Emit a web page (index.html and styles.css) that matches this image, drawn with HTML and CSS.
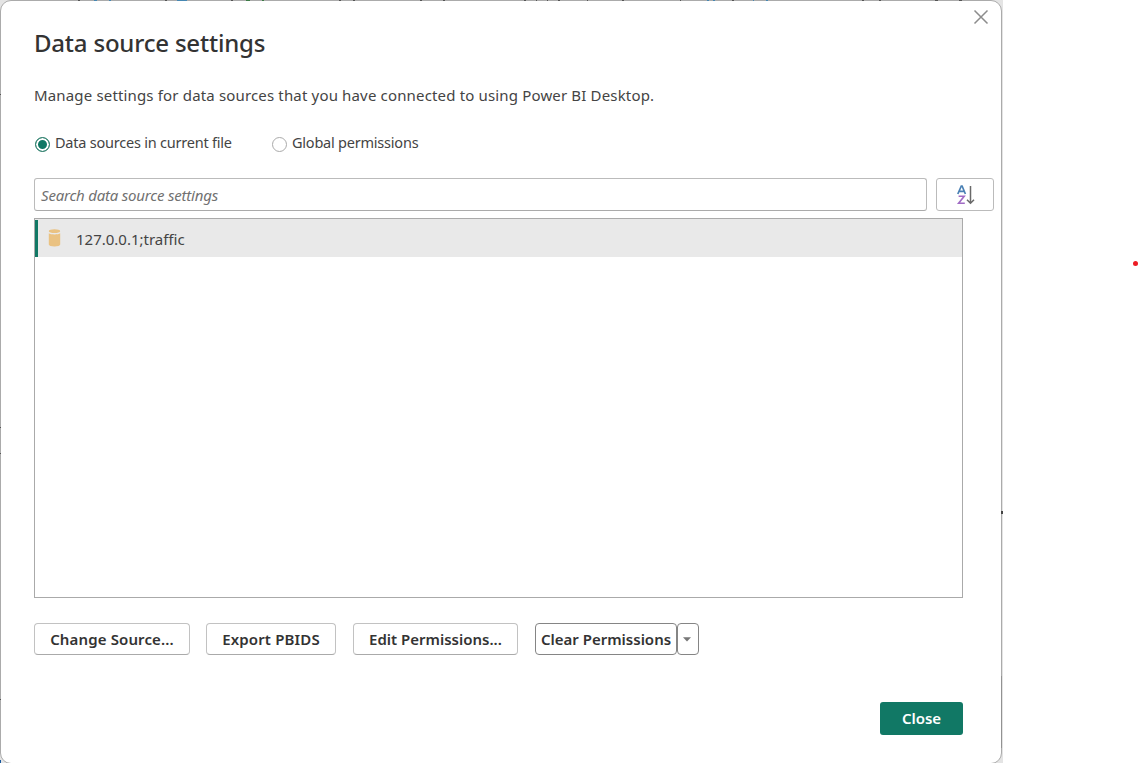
FILE: index.html
```html
<!DOCTYPE html>
<html lang="en">
<head>
<meta charset="utf-8">
<title>Data source settings</title>
<link rel="stylesheet" href="styles.css">
</head>
<body>
<div class="backdrop">
<main class="dialog">
  <button class="dismiss" aria-label="Dismiss"><svg width="16" height="16" viewBox="0 0 16 16"><path d="M1.500 1.500l13 13M14.500 1.500l-13 13" fill="none" stroke="#8c8c8c" stroke-width="1.500"/></svg></button>
  <h1 class="title"><span>Data source settings</span></h1>
  <p class="intro"><span>Manage settings for data sources that you have connected to using Power BI Desktop.</span></p>
  <div class="scope">
    <label class="option"><i class="radio radio-on"></i><span>Data sources in current file</span></label>
    <label class="option"><i class="radio"></i><span>Global permissions</span></label>
  </div>
  <div class="search-row">
    <div class="search"><span>Search data source settings</span></div>
    <button class="sort" aria-label="Sort"><svg width="20" height="22" viewBox="0 0 20 22" fill="none"><path d="M1.800 10L5.300 2h.8L9.400 10M3.200 7.300h4.900" stroke="#4a80b4" stroke-width="1.700"/><path d="M2.600 12.300h5.600L2.600 19.300h6.200" stroke="#a06bc4" stroke-width="1.600"/><path d="M14.500 2v17.200M11 15.800l3.500 3.500 3.500-3.500" stroke="#696969" stroke-width="1.500"/></svg></button>
  </div>
  <div class="list">
    <div class="item">
      <svg class="database" width="14" height="20" viewBox="0 0 14 20"><path d="M.8 5.200v11.300c0 1.200 2.500 2 5.700 2s5.700-.8 5.700-2V5.200c-1 .8-3.200 1.200-5.700 1.200S1.800 6 .8 5.200z" fill="#eac282"/><ellipse cx="6.500" cy="3.200" rx="5.700" ry="1.900" fill="#eac282"/></svg>
      <span class="name">127.0.0.1;traffic</span>
    </div>
  </div>
  <div class="actions">
    <button class="button change"><span>Change Source...</span></button>
    <button class="button export"><span>Export PBIDS</span></button>
    <button class="button edit"><span>Edit Permissions...</span></button>
    <div class="split">
      <button class="button clear"><span>Clear Permissions</span></button>
      <button class="button more" aria-label="More"><svg width="8" height="5" viewBox="0 0 8 5"><path d="M0 .3h8L4 4.500z" fill="#777"/></svg></button>
    </div>
  </div>
  <div class="footer"><button class="close"><span>Close</span></button></div>
</main>
</div>
<svg class="edge" width="1003" height="763" viewBox="0 0 1003 763" fill="none">
  <path d="M78 .5h2M165 .5h2M231 .5h2M339 .5h2M353 .5h2M420 .5h2M443 .5h2M524 .5h2M536 .5h1M547 .5h1M558 .5h2M587 .5h1M622 .5h2M680 .5h1M732 .5h2M862 .5h2M879 .5h2M935 .5h3M959 .5h3" stroke="#555"/>
  <path d="M94 .5h3M109 .5h2M177 .5h10M707 .5h2M713 .5h2M753 .5h1M766 .5h2" stroke="#4687b2"/>
  <path d="M246 .5h4M262 .5h2" stroke="#3c7a45"/>
  <path d="M0 94.500h1M0 699.500h1M0 427.500h1M0 453.500h1" stroke="#555"/>
  <path d="M1001 512.500h2" stroke="#444" stroke-width="3"/>
  <path d="M1001.500 676v72" stroke="#929292"/>
  <path d="M0 761.500h1" stroke="#17579d" stroke-width="3"/>
</svg>
<i class="dot"></i>
</body>
</html>
```
FILE: styles.css
```css
* { box-sizing: border-box; }
body { margin: 0; height: 763px; overflow: hidden; position: relative; background: #fff; font: 15px/20px "Noto Sans", "Open Sans", sans-serif; color: #444; }
button { font: inherit; padding: 0; margin: 0; background: #fff; border: 0; }
h1, p { margin: 0; }
svg { display: block; }
span { white-space: nowrap; }
.backdrop { width: 1003px; height: 764px; background: #e4e4e4; }
.dialog { position: relative; width: 1002px; height: 764px; padding: 0 7px 0 33px; border: 1px solid #ababab; border-radius: 11px; background: #fff; display: flex; flex-direction: column; }
.dismiss { position: absolute; right: 12px; top: 8px; }
.title { height: 32px; margin-top: 26px; font-size: 24px; line-height: 32px; font-weight: 500; letter-spacing: -.2px; color: #333; }
.intro { height: 20px; margin-top: 26px; letter-spacing: .16px; }
.scope { display: flex; height: 20px; margin-top: 27px; font-size: 14.5px; letter-spacing: -.22px; }
.option { display: flex; align-items: flex-start; gap: 5px; width: 237px; }
.radio { width: 15px; height: 15px; margin: 5px 0 0 1px; border: 1px solid #aaa; border-radius: 50%; flex: none; }
.radio-on { border-color: #2f7e6b; background: #117865; box-shadow: inset 0 0 0 2px #fff; }
.search-row { display: flex; gap: 9px; height: 33px; margin-top: 26px; }
.search { width: 893px; border: 1px solid #bbb; border-bottom-color: #aaa; border-radius: 3px; padding: 7px 6px; font-style: italic; line-height: 18px; letter-spacing: -.2px; color: #717171; }
.sort { width: 58px; border: 1px solid #bbb; border-radius: 3px; display: flex; align-items: center; justify-content: center; padding-left: 2px; }
.list { width: 929px; height: 380px; margin-top: 7px; border: 1px solid #aaa; }
.item { display: flex; align-items: center; height: 38px; background: linear-gradient(#117865, #117865) 0 1px / 3px 37px no-repeat #e9e9e9; padding-left: 13px; }
.name { margin: 2px 0 0 14px; }
.actions { display: flex; margin-top: 25px; height: 32px; }
.button { height: 32px; border: 1px solid #c2c2c2; border-bottom-color: #aaa; border-radius: 4px; font-weight: 600; color: #333; display: flex; align-items: center; justify-content: center; }
.change { width: 156px; margin-right: 16px; letter-spacing: .13px; }
.export { width: 130px; margin-right: 17px; letter-spacing: .15px; }
.edit { width: 165px; margin-right: 17px; }
.split { display: flex; }
.clear { width: 142px; border-color: #858585; }
.more { width: 22px; border-color: #858585; padding-right: 2px; }
.footer { display: flex; justify-content: flex-end; margin-top: 47px; padding-right: 31px; }
.close { width: 83px; height: 33px; padding-bottom: 2px; border-radius: 3px; background: #117865; color: #fff; font-weight: 600; line-height: 18px; }
.edge { position: absolute; left: 0; top: 0; pointer-events: none; }
.dot { position: absolute; left: 1133px; top: 261px; width: 5px; height: 5px; border-radius: 50%; background: #ed1c24; }
```
